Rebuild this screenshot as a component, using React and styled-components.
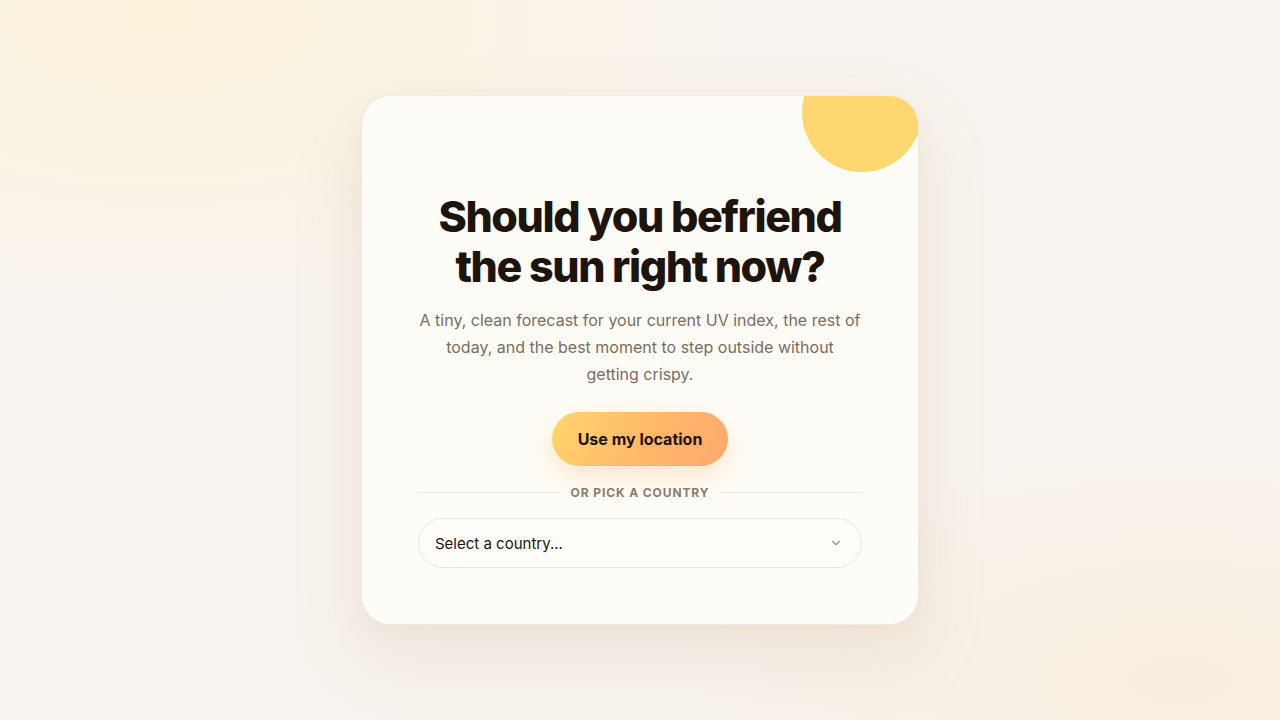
import React from 'react'
import styled, { createGlobalStyle } from 'styled-components'

const GlobalStyle = createGlobalStyle`
    html, body {
        margin: 0;
        height: 100%;
    }
    body {
        font-family: "Inter", "Noto Sans", sans-serif;
        color: #1d140c;
        background:
            radial-gradient(ellipse 760px 380px at 160px 20px, rgba(252, 242, 214, 0.8), transparent 75%),
            radial-gradient(ellipse 700px 320px at 1180px 680px, rgba(248, 236, 218, 0.75), transparent 72%),
            #f8f3ee;
    }
`

const Page = styled.main`
    width: 1280px;
    height: 720px;
    display: flex;
    align-items: flex-start;
    justify-content: center;
    padding-top: 95px;
    box-sizing: border-box;
`

const Card = styled.section`
    position: relative;
    overflow: hidden;
    width: 558px;
    height: 530px;
    box-sizing: border-box;
    padding: 95px 56px 56px;
    background: #fefcf7;
    border: 1px solid #f1ebe2;
    border-radius: 30px;
    box-shadow: 0 30px 70px rgba(180, 150, 110, 0.16), 0 6px 18px rgba(180, 150, 110, 0.06);
    display: flex;
    flex-direction: column;
    align-items: center;
    text-align: center;
`

const Sun = styled.div`
    position: absolute;
    top: -44px;
    right: -4px;
    width: 120px;
    height: 120px;
    border-radius: 50%;
    background: #ffd770;
`

const Title = styled.h1`
    margin: 0;
    font-size: 43px;
    line-height: 50px;
    font-weight: 800;
    letter-spacing: -1.4px;
    color: #1d140c;
`

const Lead = styled.p`
    margin: 16px 0 0;
    font-size: 16px;
    line-height: 27px;
    color: #7b6c60;
`

const LocationButton = styled.button`
    margin-top: 24px;
    height: 55px;
    padding: 0 26px;
    border: none;
    border-radius: 28px;
    font-family: inherit;
    font-size: 16px;
    font-weight: 700;
    color: #1d140c;
    background: linear-gradient(120deg, #ffd56c 0%, #ffb86a 55%, #ffa86c 100%);
    box-shadow: 0 10px 24px rgba(255, 176, 90, 0.28);
    cursor: pointer;
`

const Divider = styled.div`
    align-self: stretch;
    margin-top: 19px;
    display: flex;
    align-items: center;
    gap: 10px;
    font-size: 12px;
    font-weight: 700;
    letter-spacing: 0.9px;
    color: #8a7b6f;
    text-transform: uppercase;

    &::before,
    &::after {
        content: '';
        flex: 1;
        height: 1px;
        background: #ece5dc;
    }
`

const SelectBox = styled.div`
    align-self: stretch;
    margin-top: 18px;
    height: 50px;
    box-sizing: border-box;
    display: flex;
    align-items: center;
    justify-content: space-between;
    padding: 0 18px 0 16px;
    border: 1px solid #ede5dc;
    border-radius: 25px;
    background: #fffdfa;
    font-size: 15px;
    color: #1d140c;
`

function Chevron() {
    return (
        <svg width="14" height="14" viewBox="0 0 24 24" fill="none" stroke="#9a8c80" strokeWidth="2" strokeLinecap="round" strokeLinejoin="round">
            <path d="m6 9 6 6 6-6" />
        </svg>
    )
}

export default function App() {
    return (
        <>
            <GlobalStyle />
            <Page>
                <Card>
                    <Sun />
                    <Title>Should you befriend<br />the sun right now?</Title>
                    <Lead>
                        A tiny, clean forecast for your current UV index, the rest of today, and the best moment to step outside without getting crispy.
                    </Lead>
                    <LocationButton>Use my location</LocationButton>
                    <Divider>Or pick a country</Divider>
                    <SelectBox>
                        <span>Select a country...</span>
                        <Chevron />
                    </SelectBox>
                </Card>
            </Page>
        </>
    )
}
